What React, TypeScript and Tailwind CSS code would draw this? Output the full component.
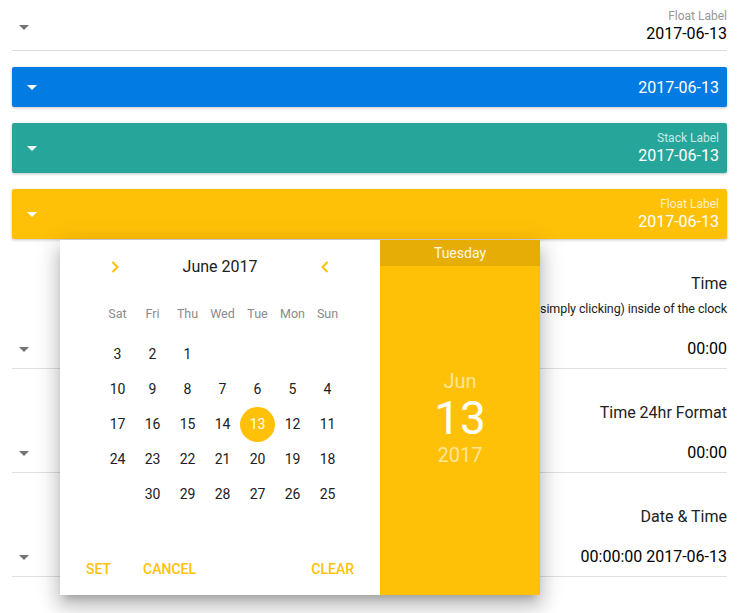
import React from 'react'

// small triangle used as the dropdown indicator
const Caret = ({ className }: { className: string }) => (
  <svg width="10" height="5" viewBox="0 0 10 5" className={className}>
    <path d="M0 0 L5 5 L10 0 Z" fill="currentColor" />
  </svg>
)

const Chevron = ({ dir }: { dir: 'left' | 'right' }) => (
  <svg width="8" height="12" viewBox="0 0 8 12" className="text-[#ffc107]">
    <path
      d={dir === 'right' ? 'M1.5 1 L6.5 6 L1.5 11' : 'M6.5 1 L1.5 6 L6.5 11'}
      fill="none"
      stroke="currentColor"
      strokeWidth="2"
    />
  </svg>
)

const weekDays = ['Sat', 'Fri', 'Thu', 'Wed', 'Tue', 'Mon', 'Sun']
const weeks: (number | null)[][] = [
  [3, 2, 1, null, null, null, null],
  [10, 9, 8, 7, 6, 5, 4],
  [17, 16, 15, 14, 13, 12, 11],
  [24, 23, 22, 21, 20, 19, 18],
  [null, 30, 29, 28, 27, 26, 25],
]

interface BarProps {
  bg: string
  label?: string
  value: string
}

const ColorBar = ({ bg, label, value }: BarProps) => (
  <div
    className={`mt-[16px] flex items-center rounded-[2px] px-[8px] text-white shadow-[0_1px_3px_rgba(0,0,0,0.25)] ${bg} ${label ? 'h-[50px]' : 'h-[40px]'}`}
  >
    <div className="flex w-[24px] justify-center">
      <Caret className="text-white" />
    </div>
    <div className="flex-1 pt-[2px] text-right">
      {label && <div className="h-[14px] text-[12px] leading-[14px] text-white/75">{label}</div>}
      <div className="text-[16px] leading-[22px]">{value}</div>
    </div>
  </div>
)

interface SectionProps {
  label: string
  helper?: string
  value: string
  top: string
}

const Section = ({ label, helper, value, top }: SectionProps) => (
  <div className={`${top} border-b border-[#e0e0e0] pb-[7px]`}>
    <div className="text-right text-[16px] leading-[24px] text-[#212121]">{label}</div>
    {helper ? (
      <div className="mt-[4px] whitespace-nowrap text-right text-[12.5px] leading-[18px] tracking-[-0.1px] text-[#212121]">
        {helper}
      </div>
    ) : null}
    <div className={`flex items-center ${helper ? 'mt-[19px]' : 'mt-[16px]'}`}>
      <div className="flex w-[24px] justify-center">
        <Caret className="text-[#757575]" />
      </div>
      <div className="flex-1 text-right text-[16px] leading-[24px] text-black">{value}</div>
    </div>
  </div>
)

const App = () => {
  return (
    <div className="relative h-[613px] w-full overflow-hidden bg-white px-[12px] font-['Roboto',_'Noto_Sans',_sans-serif]">
      {/* plain field */}
      <div className="flex items-center border-b border-[#dcdcdc] pt-[9px] pb-[5px]">
        <div className="flex w-[24px] justify-center">
          <Caret className="text-[#757575]" />
        </div>
        <div className="flex-1 text-right">
          <div className="h-[14px] text-[12px] leading-[14px] text-[#979797]">Float Label</div>
          <div className="text-[16px] leading-[22px] text-black">2017-06-13</div>
        </div>
      </div>

      <ColorBar bg="bg-[#027be3]" value="2017-06-13" />
      <ColorBar bg="bg-[#26a69a]" label="Stack Label" value="2017-06-13" />
      <ColorBar bg="bg-[#ffc107]" label="Float Label" value="2017-06-13" />

      <Section top="mt-[33px]" label="Time" helper="Drag (or simply clicking) inside of the clock" value="00:00" />
      <Section top="mt-[32px]" label="Time 24hr Format" value="00:00" />
      <Section top="mt-[32px]" label="Date & Time" value="00:00:00 2017-06-13" />

      {/* date picker popover */}
      <div className="absolute left-[60px] top-[240px] flex h-[355px] w-[480px] bg-white shadow-[0_7px_8px_-4px_rgba(0,0,0,0.2),0_12px_17px_2px_rgba(0,0,0,0.14),0_5px_22px_4px_rgba(0,0,0,0.12)]">
        <div className="flex w-[320px] flex-col">
          <div className="mt-[9px] flex h-[36px] items-center">
            <div className="flex w-[110px] justify-center">
              <Chevron dir="right" />
            </div>
            <div className="w-[100px] text-center text-[16px] text-[#212121]">June 2017</div>
            <div className="flex w-[110px] justify-center">
              <Chevron dir="left" />
            </div>
          </div>

          <div className="ml-[40px] mt-[12px] grid h-[35px] w-[245px] grid-cols-7 items-center">
            {weekDays.map((d) => (
              <div key={d} className="text-center text-[12.5px] text-[#8a8a8a]">
                {d}
              </div>
            ))}
          </div>

          <div className="ml-[40px] mt-[5px] w-[245px]">
            {weeks.map((week, i) => (
              <div key={i} className="grid h-[35px] grid-cols-7">
                {week.map((day, j) => (
                  <div key={j} className="flex items-center justify-center">
                    {day === 13 ? (
                      <div className="flex h-[35px] w-[35px] items-center justify-center rounded-full bg-[#ffc107] text-[14px] text-white">
                        13
                      </div>
                    ) : (
                      <span className="text-[14px] text-[#212121]">{day ?? ''}</span>
                    )}
                  </div>
                ))}
              </div>
            ))}
          </div>

          <div className="mt-auto mb-[8px] flex h-[36px] items-center px-[10px] text-[14px] font-medium uppercase text-[#ffc107]">
            <span className="px-[16px]">Set</span>
            <span className="px-[16px]">Cancel</span>
            <span className="ml-auto px-[16px]">Clear</span>
          </div>
        </div>

        <div className="flex w-[160px] flex-col bg-[#ffc107] text-white">
          <div className="flex h-[26px] items-center justify-center bg-[#e6ad06] text-[14px] text-white/90">Tuesday</div>
          <div className="flex flex-1 flex-col items-center justify-center pb-[26px]">
            <div className="text-[20px] leading-[24px] text-white/60">Jun</div>
            <div className="text-[46px] leading-[50px]">13</div>
            <div className="text-[20px] leading-[24px] text-white/60">2017</div>
          </div>
        </div>
      </div>
    </div>
  )
}

export default App
